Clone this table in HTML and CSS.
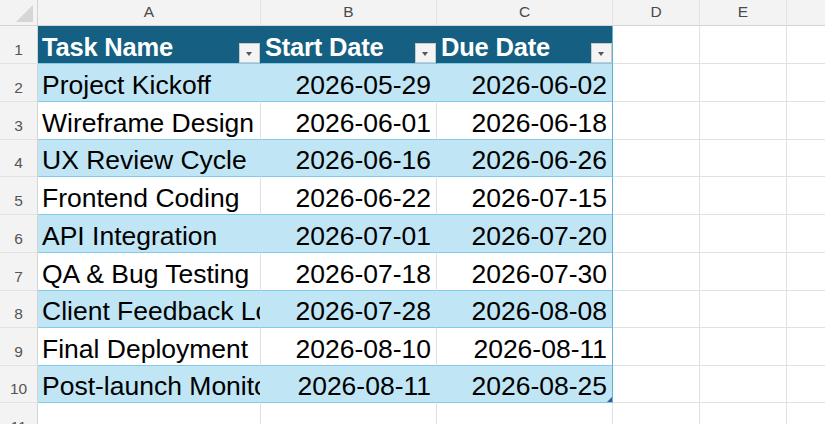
FILE: index.html
```html
<!DOCTYPE html>
<html>
<head>
<meta charset="utf-8">
<link rel="stylesheet" href="styles.css">
</head>
<body>
<div class="sheet">
  <div class="corner"><svg width="37" height="25" viewBox="0 0 37 25"><polygon points="33,5 33,22 16,22" fill="#d6d6d6"/></svg></div>
  <div class="colhdr">A</div>
  <div class="colhdr">B</div>
  <div class="colhdr">C</div>
  <div class="colhdr">D</div>
  <div class="colhdr">E</div>
  <div class="colhdr"></div>

  <div class="rowhdr">1</div>
  <div class="th">Task Name<span class="fbtn"></span></div>
  <div class="th">Start Date<span class="fbtn"></span></div>
  <div class="th last">Due Date<span class="fbtn"></span></div>
  <div class="cell"></div><div class="cell"></div><div class="cell"></div>

  <div class="rowhdr">2</div>
  <div class="td band">Project Kickoff</div>
  <div class="td band num">2026-05-29</div>
  <div class="td band num last">2026-06-02</div>
  <div class="cell"></div><div class="cell"></div><div class="cell"></div>

  <div class="rowhdr">3</div>
  <div class="td">Wireframe Design</div>
  <div class="td num">2026-06-01</div>
  <div class="td num last">2026-06-18</div>
  <div class="cell"></div><div class="cell"></div><div class="cell"></div>

  <div class="rowhdr">4</div>
  <div class="td band">UX Review Cycle</div>
  <div class="td band num">2026-06-16</div>
  <div class="td band num last">2026-06-26</div>
  <div class="cell"></div><div class="cell"></div><div class="cell"></div>

  <div class="rowhdr">5</div>
  <div class="td">Frontend Coding</div>
  <div class="td num">2026-06-22</div>
  <div class="td num last">2026-07-15</div>
  <div class="cell"></div><div class="cell"></div><div class="cell"></div>

  <div class="rowhdr">6</div>
  <div class="td band">API Integration</div>
  <div class="td band num">2026-07-01</div>
  <div class="td band num last">2026-07-20</div>
  <div class="cell"></div><div class="cell"></div><div class="cell"></div>

  <div class="rowhdr">7</div>
  <div class="td">QA &amp; Bug Testing</div>
  <div class="td num">2026-07-18</div>
  <div class="td num last">2026-07-30</div>
  <div class="cell"></div><div class="cell"></div><div class="cell"></div>

  <div class="rowhdr">8</div>
  <div class="td band">Client Feedback Loop</div>
  <div class="td band num">2026-07-28</div>
  <div class="td band num last">2026-08-08</div>
  <div class="cell"></div><div class="cell"></div><div class="cell"></div>

  <div class="rowhdr">9</div>
  <div class="td">Final Deployment</div>
  <div class="td num">2026-08-10</div>
  <div class="td num last">2026-08-11</div>
  <div class="cell"></div><div class="cell"></div><div class="cell"></div>

  <div class="rowhdr">10</div>
  <div class="td band">Post-launch Monitoring</div>
  <div class="td band num">2026-08-11</div>
  <div class="td band num last">2026-08-25<span class="handle"></span></div>
  <div class="cell"></div><div class="cell"></div><div class="cell"></div>

  <div class="rowhdr">11</div>
  <div class="cell"></div><div class="cell"></div><div class="cell"></div>
  <div class="cell"></div><div class="cell"></div><div class="cell"></div>
</div>
</body>
</html>
```

FILE: styles.css
```css
* { box-sizing: border-box; }
html, body { margin: 0; padding: 0; background: #ffffff; }
body { width: 825px; height: 424px; overflow: hidden; }

.sheet {
  display: grid;
  grid-template-columns: 38px 223px 176px 176px 87px 87px 87px;
  grid-template-rows: 26px 38px 38px 38px 37px 38px 38px 38px 37px 38px 37px 38px;
  width: 825px;
  height: 424px;
  overflow: hidden;
  font-family: "Liberation Sans", Arial, sans-serif;
  color: #000;
}

.corner {
  background: #f3f3f3;
  border-right: 1px solid #d4d4d4;
  border-bottom: 1px solid #d4d4d4;
}
.corner svg { display: block; }

.colhdr {
  background: #f3f3f3;
  border-right: 1px solid #e2e2e2;
  border-bottom: 1px solid #d4d4d4;
  font-size: 15.5px;
  color: #4a4a4a;
  display: flex;
  align-items: flex-end;
  justify-content: center;
  line-height: 18px;
  padding-bottom: 4px;
}

.rowhdr {
  background: #f3f3f3;
  border-right: 1px solid #d4d4d4;
  border-bottom: 1px solid #e2e2e2;
  font-size: 15.5px;
  color: #555;
  display: flex;
  align-items: flex-end;
  justify-content: center;
  line-height: 18px;
  padding-bottom: 4px;
}

.cell {
  border-right: 1px solid #e1e1e1;
  border-bottom: 1px solid #e1e1e1;
}

.th {
  position: relative;
  background: #156082;
  color: #fff;
  font-weight: bold;
  font-size: 25.5px;
  letter-spacing: -0.2px;
  line-height: 30px;
  display: flex;
  align-items: flex-end;
  padding: 0 0 1px 4px;
  border-right: 1px solid #156082;
  border-bottom: 1px solid #83caeb;
  white-space: nowrap;
}

.fbtn {
  position: absolute;
  right: 0;
  bottom: 0;
  width: 21px;
  height: 20px;
  background: #f4f4f4;
  border: 1px solid #c9c9c9;
}
.fbtn::after {
  content: "";
  position: absolute;
  left: 6px;
  top: 8px;
  border-left: 3.5px solid transparent;
  border-right: 3.5px solid transparent;
  border-top: 4px solid #555;
}

.td {
  position: relative;
  font-size: 26.5px;
  line-height: 30px;
  display: flex;
  align-items: flex-end;
  padding: 0 0 1px 4px;
  border-right: 1px solid #e1e1e1;
  border-bottom: 1px solid #83caeb;
  white-space: nowrap;
  overflow: hidden;
}
.td.band {
  background: #c0e6f5;
  border-right-color: #c0e6f5;
}
.td.num {
  justify-content: flex-end;
  padding: 0 5px 1px 0;
}
.th.last, .td.last, .td.band.last {
  border-right: 1px solid #5fb0db;
}

.handle {
  position: absolute;
  right: 0;
  bottom: 0;
  width: 5px;
  height: 5px;
  background: #2d5f9e;
  clip-path: polygon(100% 0, 100% 100%, 0 100%);
}
```
